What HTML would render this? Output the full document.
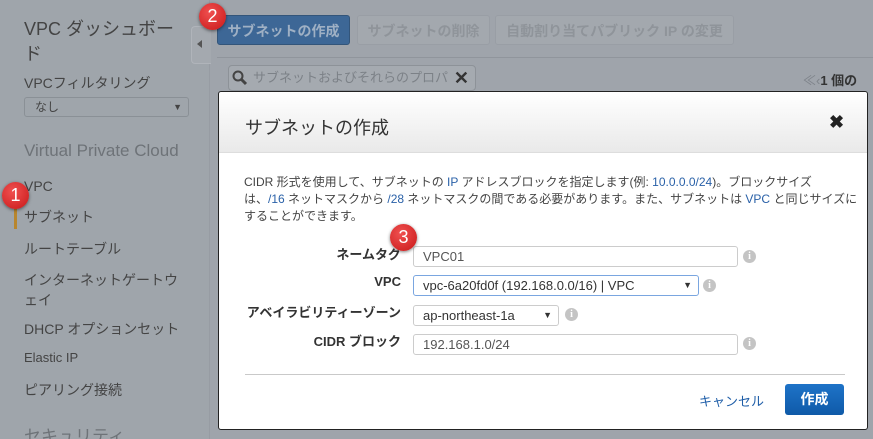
<!DOCTYPE html><html><head><meta charset="utf-8"><style>
*{box-sizing:border-box;margin:0;padding:0}
html{width:873px;height:439px;overflow:hidden}
body{width:873px;height:439px;overflow:hidden;background:#9fa4ab;font-family:"Liberation Sans","Noto Sans CJK JP",sans-serif;color:#3d4248;position:relative}
.a{position:absolute;white-space:nowrap}
.side{position:absolute;left:0;top:0;width:210px;height:439px;border-right:1px solid #979ca3;background:#9fa5ab;overflow:hidden}
.badge{position:absolute;width:27px;height:27px;border-radius:50%;background:radial-gradient(circle at 40% 35%,#f05050,#c81818);color:#fff;font-size:18px;text-align:center;line-height:27px;box-shadow:0 1px 3px rgba(0,0,0,.5)}
.btn{position:absolute;top:15px;height:30px;border-radius:3px;font-size:14px;font-weight:bold;line-height:30px;text-align:center}
.m{position:absolute;left:218px;top:91px;width:650px;height:339px;background:#fff;border:1px solid #222;border-radius:3px}
.inp{position:absolute;height:21px;border:1px solid #ccc;border-radius:3px;font-size:13px;line-height:19px;padding-left:9px;color:#555}
.info{position:absolute;width:13px;height:13px;border-radius:50%;background:#c4c4c4;color:#fff;font-size:10px;font-weight:bold;text-align:center;line-height:13px;font-family:"Liberation Serif",serif}
.lbl{position:absolute;right:0;font-size:13px;font-weight:bold;color:#333}
</style></head><body>
<div class="side">
<div class="a" style="left:24px;top:17px;font-size:18px;line-height:25px;color:#444">VPC ダッシュボー<br>ド</div>
<div class="a" style="left:24px;top:73px;font-size:14px;color:#444">VPCフィルタリング</div>
<div class="a" style="left:24px;top:97px;width:165px;height:20px;border:1px solid #8a9096;border-radius:3px;font-size:12px;line-height:18px;padding-left:10px;color:#444">なし<span style="position:absolute;right:6px;font-size:9px">▼</span></div>
<div class="a" style="left:24px;top:141px;font-size:17px;color:#6e7378">Virtual Private Cloud</div>
<div class="a" style="left:24px;top:178px;font-size:14px;color:#444">VPC</div>
<div class="a" style="left:14px;top:203px;width:3px;height:26px;background:#b8862e"></div>
<div class="a" style="left:24px;top:207px;font-size:14px;color:#444">サブネット</div>
<div class="a" style="left:24px;top:239px;font-size:14px;color:#444">ルートテーブル</div>
<div class="a" style="left:24px;top:270px;font-size:14px;line-height:20px;color:#444">インターネットゲートウ<br>ェイ</div>
<div class="a" style="left:24px;top:319px;font-size:14px;color:#444">DHCP オプションセット</div>
<div class="a" style="left:24px;top:350px;font-size:13px;color:#444">Elastic IP</div>
<div class="a" style="left:24px;top:380px;font-size:14px;color:#444">ピアリング接続</div>
<div class="a" style="left:24px;top:422px;font-size:17px;color:#6e7378">セキュリティ</div>
</div>
<div class="a" style="left:191px;top:26px;width:20px;height:38px;border:1px solid #b0b4ba;border-right:none;border-radius:4px 0 0 4px;background:#a4a9af"></div>
<div class="a" style="left:197px;top:40px;width:0;height:0;border:4px solid transparent;border-right:5px solid #555;border-left:none"></div>
<div class="btn" style="left:217px;width:133px;background:#3d6796;border:1px solid #33557a;color:#9fb0c4">サブネットの作成</div>
<div class="btn" style="left:357px;width:133px;background:#a3a8ae;border:1px solid #999ea5;color:#8f949a">サブネットの削除</div>
<div class="btn" style="left:495px;width:239px;background:#a3a8ae;border:1px solid #999ea5;color:#8f949a">自動割り当てパブリック IP の変更</div>
<div class="a" style="left:217px;top:57px;width:656px;height:1px;background:#90959c"></div>
<div class="a" style="left:228px;top:65px;width:248px;height:26px;border:1px solid #8d9298;border-radius:4px;background:#a5aab0;font-size:13px;line-height:24px;padding-left:24px;color:#7c8187">サブネットおよびそれらのプロパ<span style="position:absolute;right:6px;font-size:18px;color:#333;font-weight:bold">✕</span></div>
<svg class="a" style="left:232px;top:70px" width="16" height="16"><circle cx="6" cy="6" r="4.5" fill="none" stroke="#444" stroke-width="2"/><path d="M9 9l5 5" stroke="#444" stroke-width="3"/></svg>
<div class="a" style="left:803px;top:70px;font-size:13px;color:#333"><span style="color:#7e838a">≪‹</span><b>1 個の</b></div>
<div class="m">
<div class="a" style="left:0;top:0;width:648px;height:61px;background:linear-gradient(#fff,#e9e9e9);border-bottom:1px solid #ddd;border-radius:3px 3px 0 0"></div>
<div class="a" style="left:26px;top:22px;font-size:18px;color:#333">サブネットの作成</div>
<div class="a" style="left:610px;top:20px;font-size:18px;font-weight:bold;color:#222">✖</div>
<div class="a" style="left:25px;top:82px;font-size:12px;line-height:17px;color:#444">CIDR 形式を使用して、サブネットの <span style="color:#2a61a8">IP</span> アドレスブロックを指定します(例: <span style="color:#2a61a8">10.0.0.0/24</span>)。ブロックサイズ<br>は、<span style="color:#2a61a8">/16</span> ネットマスクから <span style="color:#2a61a8">/28</span> ネットマスクの間である必要があります。また、サブネットは <span style="color:#2a61a8">VPC</span> と同じサイズに<br>することができます。</div>
<div class="a" style="left:0;top:150px;width:182px;height:120px">
<div class="lbl" style="top:2px">ネームタグ</div>
<div class="lbl" style="top:32px">VPC</div>
<div class="lbl" style="top:60px">アベイラビリティーゾーン</div>
<div class="lbl" style="top:89px">CIDR ブロック</div>
</div>
<div class="inp" style="left:194px;top:154px;width:325px">VPC01</div>
<div class="info" style="left:524px;top:158px">i</div>
<div class="inp" style="left:194px;top:183px;width:286px;border-color:#7aa6e0;color:#333">vpc-6a20fd0f (192.168.0.0/16) | VPC<span style="position:absolute;right:6px;font-size:9px">▼</span></div>
<div class="info" style="left:484px;top:187px">i</div>
<div class="inp" style="left:194px;top:213px;width:146px;color:#333">ap-northeast-1a<span style="position:absolute;right:6px;font-size:9px">▼</span></div>
<div class="info" style="left:346px;top:216px">i</div>
<div class="inp" style="left:194px;top:242px;width:325px">192.168.1.0/24</div>
<div class="info" style="left:524px;top:245px">i</div>
<div class="a" style="left:26px;top:282px;width:600px;height:1px;background:#c9c9c9"></div>
<div class="a" style="left:480px;top:299px;font-size:13px;color:#1f5ea8">キャンセル</div>
<div class="a" style="left:566px;top:292px;width:59px;height:31px;border-radius:3px;background:linear-gradient(#1e73c8,#0f5aa8);color:#fff;font-size:14px;font-weight:bold;text-align:center;line-height:31px">作成</div>
</div>
<div class="badge" style="left:2px;top:182px">1</div>
<div class="badge" style="left:199px;top:3px">2</div>
<div class="badge" style="left:390px;top:224px">3</div>
</body></html>
